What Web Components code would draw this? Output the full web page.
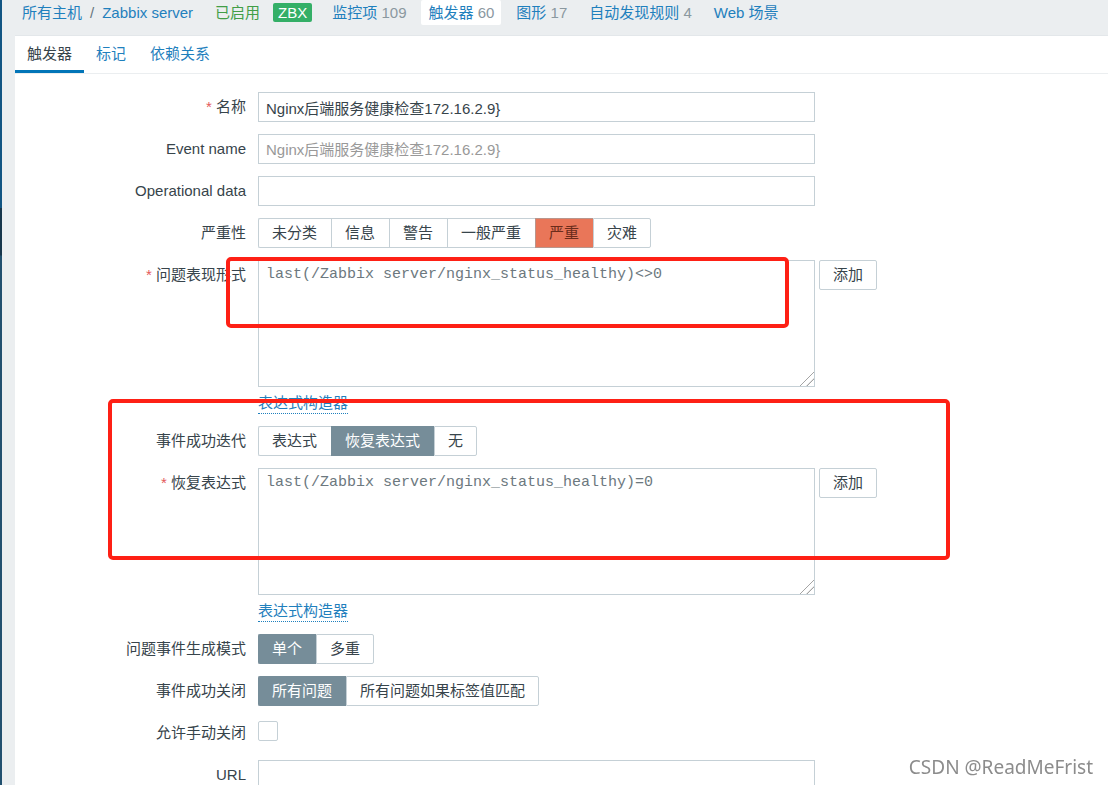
<!DOCTYPE html>
<html lang="zh-CN">
<head>
<meta charset="utf-8">
<title>触发器</title>
<style>
html { scrollbar-width: none; }
body {
  margin: 0;
  background: #ebeef0;
  color: #37444b;
  font: 15px/20px "Liberation Sans", "Noto Sans CJK SC", sans-serif;
}
</style>
</head>
<body>
<z-page>
  <z-host-nav slot="nav"></z-host-nav>
  <z-tabs slot="tabs"></z-tabs>
  <z-form>
    <z-text-row required value="Nginx后端服务健康检查172.16.2.9}">名称</z-text-row>
    <z-text-row placeholder="Nginx后端服务健康检查172.16.2.9}">Event name</z-text-row>
    <z-text-row>Operational data</z-text-row>
    <z-segment-row options="未分类,信息,警告,一般严重,严重,灾难" selected="4" tone="high">严重性</z-segment-row>
    <z-expression-row value="last(/Zabbix server/nginx_status_healthy)&lt;&gt;0">问题表现形式</z-expression-row>
    <z-segment-row options="表达式,恢复表达式,无" selected="1">事件成功迭代</z-segment-row>
    <z-expression-row value="last(/Zabbix server/nginx_status_healthy)=0">恢复表达式</z-expression-row>
    <z-segment-row options="单个,多重" selected="0">问题事件生成模式</z-segment-row>
    <z-segment-row options="所有问题,所有问题如果标签值匹配" selected="0">事件成功关闭</z-segment-row>
    <z-check-row>允许手动关闭</z-check-row>
    <z-text-row>URL</z-text-row>
    <z-marker slot="marks" style="--x:211px;--y:183px;--w:563px;--h:71px"></z-marker>
    <z-marker slot="marks" style="--x:93px;--y:325px;--w:842px;--h:161px"></z-marker>
  </z-form>
</z-page>
<z-watermark>CSDN @ReadMeFrist</z-watermark>

<script>
const define = (name, html, setup) => {
  const template = document.createElement('template');
  template.innerHTML = html;
  customElements.define(name, class extends HTMLElement {
    constructor() {
      super();
      this.attachShadow({ mode: 'open' }).append(template.content.cloneNode(true));
      if (setup) setup(this, this.shadowRoot);
    }
  });
};

const rowStyle = `
  * { box-sizing: border-box; }
  :host { display: block; }
  .row { display: grid; grid-template-columns: 231px minmax(0, 1fr); column-gap: 12px; align-items: start; }
  .name { text-align: right; line-height: 30px; color: #37444b; }
  .required::before { content: "* "; color: #e45959; }
  input, textarea, button { font: inherit; color: inherit; margin: 0; }
  .box { display: block; width: 100%; max-width: 557px; border: 1px solid #c5d0d6; border-radius: 0; background: #fff; outline: 0; }
`;

define('z-page', `
  <style>
    :host { display: block; min-height: 100vh; box-sizing: border-box; padding-left: 15px; position: relative; }
    .rail { position: absolute; left: 0; top: 0; bottom: 0; width: 2px;
      background: linear-gradient(#125583 0 208px, #17364c 208px 255px, #21506f 256px); }
    main { background: #fff; border-top: 1px solid #e3e7ea; }
  </style>
  <div class="rail"></div>
  <slot name="nav"></slot>
  <main><slot name="tabs"></slot><slot></slot></main>
`);

define('z-host-nav', `
  <style>
    :host { display: block; }
    nav { display: flex; align-items: center; height: 25px; padding: 0 0 10px 7px; white-space: nowrap; }
    a { color: #1f80bd; text-decoration: none; }
    .sep { padding: 0 8px; color: #66757d; }
    .on { color: #429e47; padding: 0 13px 0 22px; }
    .zbx { background: #34af67; color: #fff; border-radius: 2px; padding: 0 5px; margin-right: 13px; line-height: 19px; }
    .item { padding: 0 7px; line-height: 25px; margin-right: 8px; color: #8a989f; }
    .current { background: #fff; border-radius: 2px; }
  </style>
  <nav>
    <a href="#hosts">所有主机</a><span class="sep">/</span><a href="#host">Zabbix server</a>
    <span class="on">已启用</span><span class="zbx">ZBX</span>
    <span class="item"><a href="#items">监控项</a> 109</span>
    <span class="item current"><a href="#triggers">触发器</a> 60</span>
    <span class="item"><a href="#graphs">图形</a> 17</span>
    <span class="item"><a href="#discovery">自动发现规则</a> 4</span>
    <span class="item"><a href="#web">Web 场景</a></span>
  </nav>
`);

define('z-tabs', `
  <style>
    :host { display: block; border-bottom: 1px solid #ebeef0; }
    nav { display: flex; }
    a { padding: 2px 12px 0; line-height: 32px; color: #1f80bd; text-decoration: none; border-bottom: 3px solid transparent; }
    .current { color: #37444b; border-color: #0275b8; }
  </style>
  <nav><a class="current" href="#trigger">触发器</a><a href="#tags">标记</a><a href="#deps">依赖关系</a></nav>
`);

define('z-form', `
  <style>
    :host { display: block; position: relative; }
    form { display: flex; flex-direction: column; gap: 12px; padding-top: 18px; }
  </style>
  <form><slot></slot></form>
  <slot name="marks"></slot>
`);

define('z-text-row', `
  <style>${rowStyle}
    .box { height: 30px; padding: 0 7px; }
    .box::placeholder { color: #999; opacity: 1; }
  </style>
  <div class="row"><label class="name" for="field"><slot></slot></label><input class="box" id="field" type="text"></div>
`, (host, root) => {
  const field = root.querySelector('input');
  field.value = host.getAttribute('value') || '';
  field.placeholder = host.getAttribute('placeholder') || '';
  root.querySelector('label').classList.toggle('required', host.hasAttribute('required'));
});

define('z-segment-row', `
  <style>${rowStyle}
    .group { display: flex; justify-self: start; position: relative; }
    label { display: block; height: 30px; line-height: 28px; padding: 0 14px 0 13px; color: #37444b;
      border: 1px solid #c5d0d6; border-right-width: 0; white-space: nowrap; }
    label:first-of-type { border-radius: 2px 0 0 2px; }
    label:last-of-type { border-right-width: 1px; border-radius: 0 2px 2px 0; padding-right: 13px; }
    input { position: absolute; opacity: 0; pointer-events: none; }
    input:checked + label { background: #768d99; border-color: #768d99; color: #fff; }
    :host([tone="high"]) input:checked + label { background: #e97659; border-color: #b9958c; color: #6b2c1b; }
  </style>
  <div class="row"><span class="name" id="name"><slot></slot></span><div class="group" role="radiogroup" aria-labelledby="name"></div></div>
`, (host, root) => {
  const group = root.querySelector('.group');
  host.getAttribute('options').split(',').forEach((text, i) => {
    const radio = document.createElement('input');
    radio.type = 'radio';
    radio.name = 'choice';
    radio.id = 'option' + i;
    radio.checked = i === Number(host.getAttribute('selected'));
    const label = document.createElement('label');
    label.htmlFor = radio.id;
    label.textContent = text;
    group.append(radio, label);
  });
});

define('z-expression-row', `
  <style>${rowStyle}
    .line { display: flex; align-items: flex-start; gap: 4px; }
    .box { height: 127px; padding: 4px 7px; line-height: 20px; resize: vertical; color: #6c787e;
      font-family: "Liberation Mono", monospace; }
    .box::-webkit-resizer { background: linear-gradient(135deg, transparent 51%, #a4a4a4 52% 55%, transparent 56% 73%, #a4a4a4 74% 77%, transparent 78%); }
    button { flex: none; height: 30px; padding: 0 13px; border: 1px solid #c5d0d6; border-radius: 2px; background: #fff; color: #37444b; }
    .more { height: 27px; padding-top: 6px; }
    a { display: inline-block; line-height: 20px; color: #1f80bd; text-decoration: none; border-bottom: 1px dotted #1f80bd; }
  </style>
  <div class="row">
    <label class="name required" for="field"><slot></slot></label>
    <div>
      <div class="line"><textarea class="box" id="field" readonly></textarea><button type="button">添加</button></div>
      <div class="more"><a href="#constructor">表达式构造器</a></div>
    </div>
  </div>
`, (host, root) => { root.querySelector('textarea').value = host.getAttribute('value'); });

define('z-check-row', `
  <style>${rowStyle}
    .cell { display: flex; align-items: center; height: 26px; }
    input { appearance: none; width: 20px; height: 20px; border: 1px solid #c5d0d6; border-radius: 2px; background: #fff; }
    input:checked { background: #768d99; }
  </style>
  <div class="row"><label class="name" for="field"><slot></slot></label><div class="cell"><input id="field" type="checkbox"></div></div>
`);

define('z-marker', `
  <style>
    :host { position: absolute; left: var(--x); top: var(--y); width: var(--w); height: var(--h);
      box-sizing: border-box; border: 4px solid #fe2015; border-radius: 5px; pointer-events: none; }
  </style>
`);

define('z-watermark', `
  <style>
    :host { position: fixed; right: 15px; bottom: 4px; font: 19px/28px "Noto Sans", sans-serif; color: #8c8c8c;
      text-shadow: -1px -1px 0 #fff; pointer-events: none; }
  </style>
  <slot></slot>
`);
</script>
</body>
</html>
